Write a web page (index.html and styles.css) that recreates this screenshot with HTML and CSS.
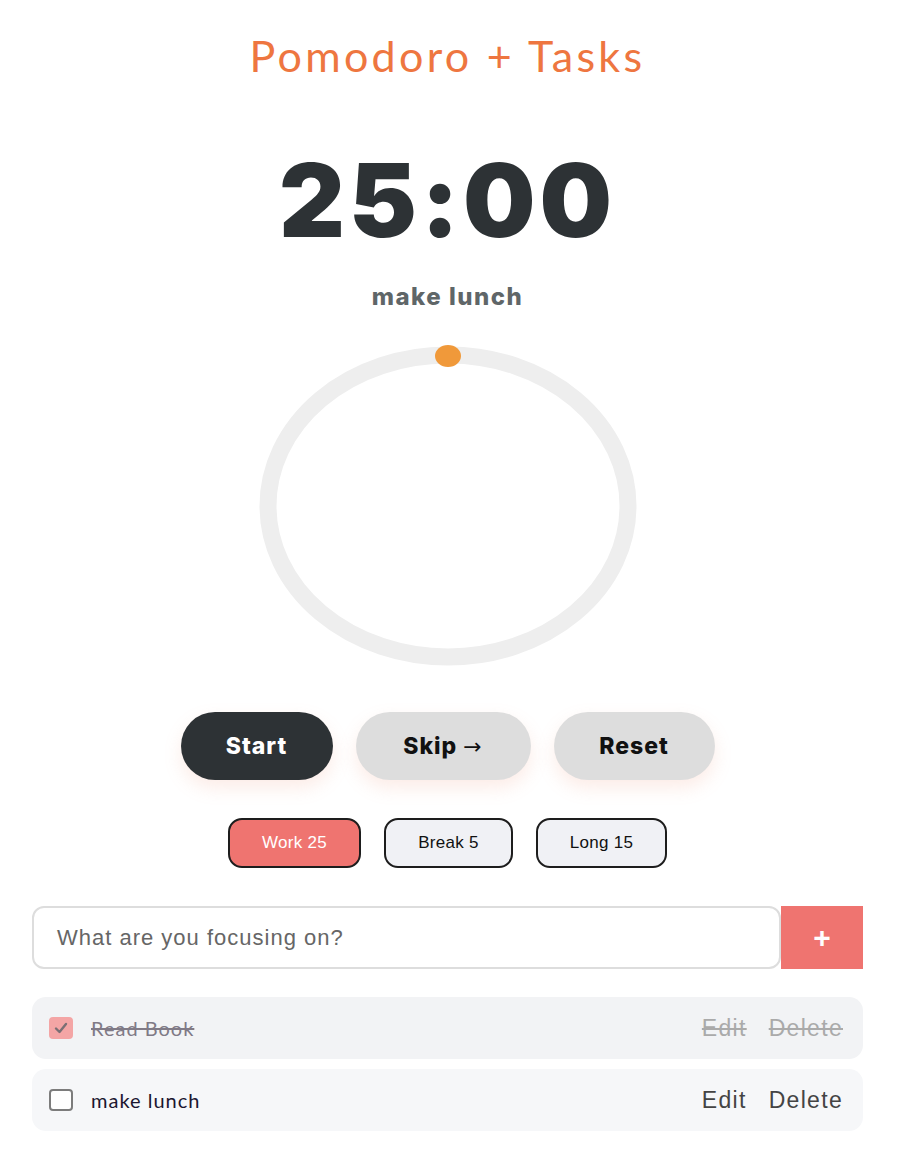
FILE: index.html
```html
<!DOCTYPE html>
<html>
<head>
<meta charset="utf-8">
<link rel="stylesheet" href="styles.css">
</head>
<body>
<main class="app">
  <h1 class="title">Pomodoro + Tasks</h1>
  <div class="time">25:00</div>
  <div class="current">make lunch</div>
  <div class="ring-wrap">
    <svg class="ring" width="400" height="336" viewBox="0 0 400 336">
      <ellipse cx="200" cy="166" rx="180" ry="151" fill="none" stroke="#eeeeee" stroke-width="17"/>
      <ellipse cx="200" cy="16" rx="13" ry="11" fill="#f0993a"/>
    </svg>
  </div>
  <div class="controls">
    <button class="ctl ctl-dark">Start</button>
    <button class="ctl ctl-skip">Skip <span class="arrow">→</span></button>
    <button class="ctl ctl-reset">Reset</button>
  </div>
  <div class="modes">
    <button class="mode mode-active">Work 25</button>
    <button class="mode">Break 5</button>
    <button class="mode">Long 15</button>
  </div>
  <div class="add">
    <div class="input">What are you focusing on?</div>
    <button class="plus">+</button>
  </div>
  <ul class="tasks">
    <li class="task task-done">
      <span class="check check-on">
        <svg width="14" height="12" viewBox="0 0 14 12"><path d="M2 6.5 L5.5 10 L12 2" fill="none" stroke="#7a6f74" stroke-width="2.4" stroke-linecap="round" stroke-linejoin="round"/></svg>
      </span>
      <span class="task-name">Read Book</span>
      <span class="act">Edit</span>
      <span class="act">Delete</span>
    </li>
    <li class="task">
      <span class="check"></span>
      <span class="task-name">make lunch</span>
      <span class="act">Edit</span>
      <span class="act">Delete</span>
    </li>
  </ul>
</main>
</body>
</html>
```

FILE: styles.css
```css
* { box-sizing: border-box; }
body {
  margin: 0;
  background: #ffffff;
  font-family: "Lato", "Liberation Sans", sans-serif;
}
.app {
  width: 831px;
  margin-left: 32px;
  display: flex;
  flex-direction: column;
  align-items: center;
}
.title {
  margin: 28px 0 0;
  font-family: "Lato", sans-serif;
  font-weight: 400;
  font-size: 43px;
  line-height: 56px;
  letter-spacing: 3.3px;
  color: #ee7640;
}
.time {
  margin-top: 64px;
  font-family: "Inter", sans-serif;
  font-weight: 900;
  font-size: 102px;
  line-height: 104px;
  letter-spacing: 4px;
  color: #2d3235;
}
.current {
  margin-top: 30px;
  font-family: "Inter", sans-serif;
  font-weight: 800;
  font-size: 24px;
  line-height: 30px;
  letter-spacing: 1.5px;
  color: #5f6668;
}
.ring-wrap {
  margin-top: 28px;
  height: 336px;
}
.ring { display: block; }
.controls {
  margin-top: 36px;
  display: flex;
  gap: 23px;
}
.ctl {
  height: 68px;
  border: none;
  border-radius: 34px;
  font-family: "Inter", sans-serif;
  font-weight: 800;
  font-size: 23px;
  letter-spacing: 1px;
  box-shadow: 0 8px 18px rgba(240, 150, 120, 0.18);
}
.arrow { font-family: "DejaVu Sans", sans-serif; font-weight: 400; font-size: 22px; }
.ctl-dark { width: 152px; background: #2d3235; color: #ffffff; }
.ctl-skip { width: 175px; background: #dddddd; color: #111111; }
.ctl-reset { width: 161px; background: #dddddd; color: #111111; }
.modes {
  margin-top: 38px;
  display: flex;
  gap: 23px;
}
.mode {
  width: 129px;
  height: 50px;
  border: 2px solid #1d1d1d;
  border-radius: 14px;
  background: #f0f1f5;
  font-family: "Liberation Sans", sans-serif;
  font-size: 17px;
  letter-spacing: 0.3px;
  color: #111111;
}
.mode-active { width: 133px; background: #ef7470; color: #ffffff; }
.modes .mode:nth-child(3) { width: 131px; }
.add {
  margin-top: 38px;
  width: 100%;
  display: flex;
}
.input {
  flex: 1;
  height: 63px;
  border: 2px solid #dddddd;
  border-radius: 12px;
  padding-left: 23px;
  display: flex;
  align-items: center;
  font-family: "Liberation Sans", sans-serif;
  font-size: 22px;
  letter-spacing: 1px;
  color: #666666;
}
.plus {
  width: 82px;
  height: 63px;
  border: none;
  background: #ef7470;
  color: #ffffff;
  font-family: "Liberation Sans", sans-serif;
  font-weight: 700;
  font-size: 30px;
}
.tasks {
  list-style: none;
  margin: 28px 0 0;
  padding: 0;
  width: 100%;
  display: flex;
  flex-direction: column;
  gap: 10px;
}
.task {
  height: 62px;
  border-radius: 14px;
  background: #f6f7f9;
  display: flex;
  align-items: center;
  padding: 0 20px 0 17px;
  gap: 22px;
}
.task-done { background: #f2f3f5; }
.check {
  width: 24px;
  height: 22px;
  border: 2px solid #7c7c7c;
  border-radius: 4px;
  background: #ffffff;
  display: flex;
  align-items: center;
  justify-content: center;
  margin-right: -4px;
}
.check-on { border: none; background: #f4a5a5; }
.task-name {
  flex: 1;
  font-family: "Lato", sans-serif;
  font-size: 20px;
  letter-spacing: 1px;
  color: #1b1630;
}
.task-done .task-name { color: #807a86; text-decoration: line-through; }
.act {
  font-family: "Liberation Sans", sans-serif;
  font-size: 23px;
  letter-spacing: 1.3px;
  color: #444444;
}
.task-done .act { color: #aaaaaa; text-decoration: line-through; }
```
